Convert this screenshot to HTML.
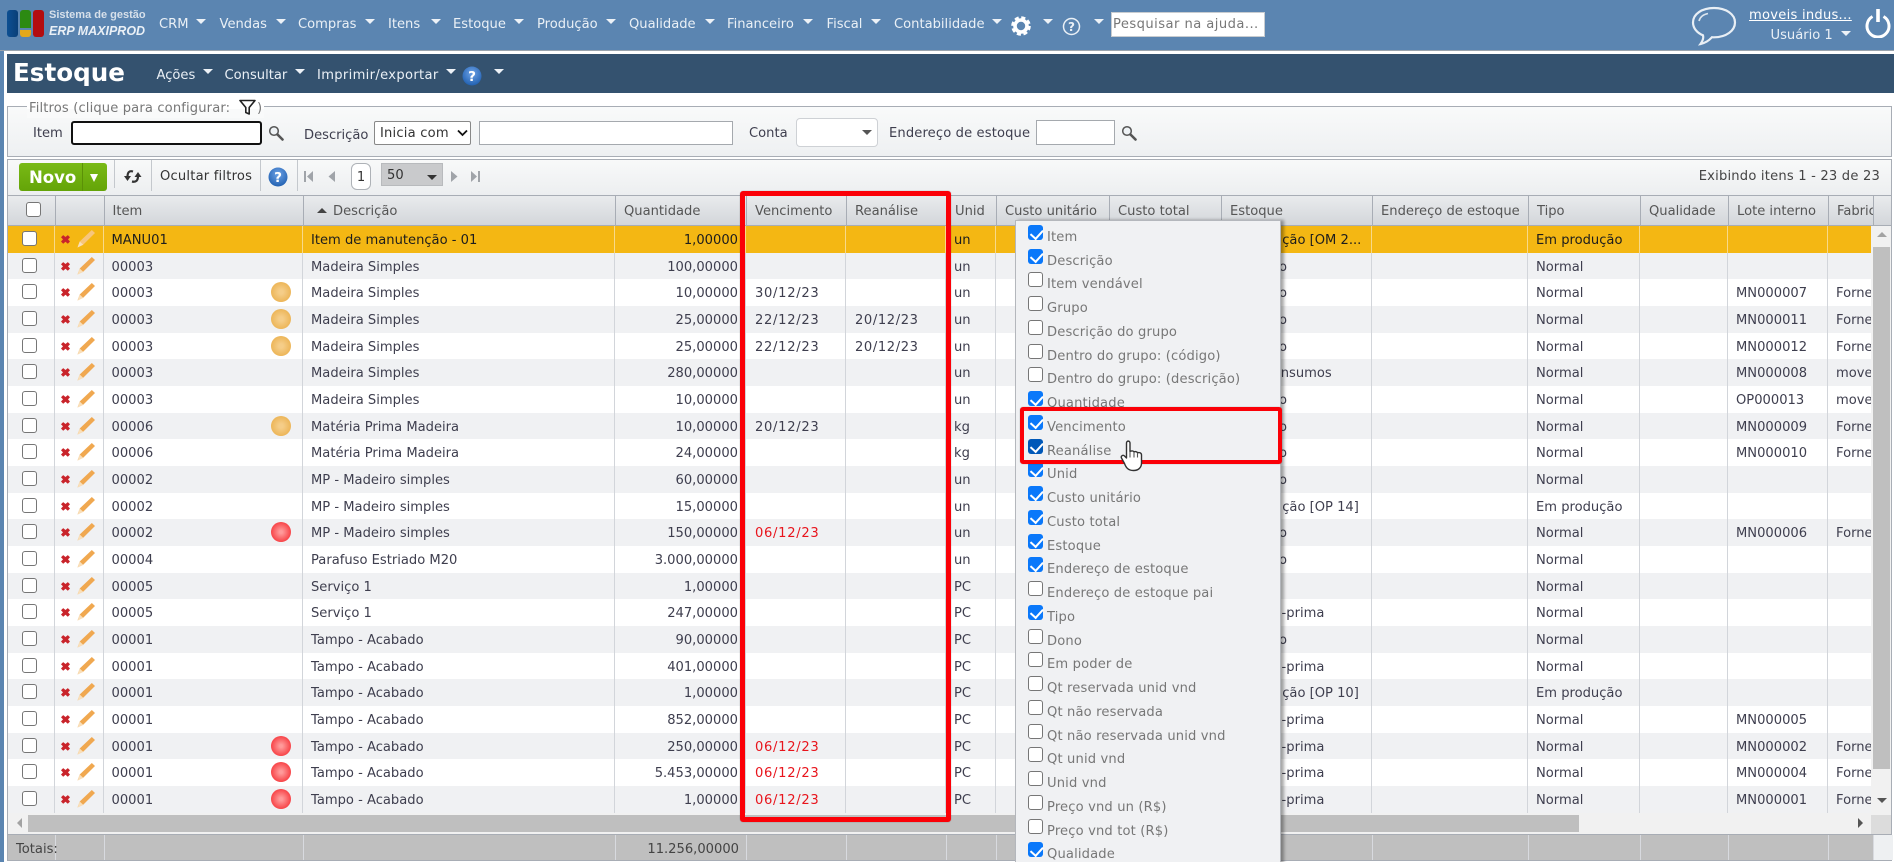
<!DOCTYPE html>
<html lang="pt"><head><meta charset="utf-8"><title>Estoque</title>
<style>
*{box-sizing:border-box}
html,body{margin:0;padding:0;width:1894px;height:862px;overflow:hidden;background:#fff}
body{position:relative;font:13.1px "DejaVu Sans",Verdana,sans-serif;color:#3e3e4e}
.abs,.n,.a,.t{position:absolute}
.n{top:16px;color:#eaf0f6;line-height:18px;white-space:nowrap}
.a{width:0;height:0;border-left:5px solid transparent;border-right:5px solid transparent;border-top:5.5px solid #edf2f7}
.t{white-space:nowrap;line-height:18px}
.h{position:absolute;left:7px;top:195px;width:1885px;height:31px;display:flex;background:linear-gradient(#e9ebed,#d3d6da);border:1px solid #a8adb5;color:#555;line-height:31px}
.h p{margin:0;padding:0 0 0 8px;border-right:1px solid #a8adb5;white-space:nowrap;overflow:hidden;height:29px;flex:none;position:relative}
.b{position:absolute;left:7px;top:226px;width:1864px;height:587px;overflow:hidden}
.r{display:flex;height:26.68px;line-height:30px;background:#fff}
.r:nth-child(even){background:#f0f1f3}
.r.s{background:#f4b713;color:#1d1d1d}
.r p{margin:0;padding:0 8px;border-right:1px solid #d2d5da;white-space:nowrap;overflow:hidden;flex:none;position:relative;height:100%}
.r.s p{border-right-color:#f8d98a}
.r p:nth-child(1),.h p:nth-child(1),.f p:nth-child(1){width:48px}
.r p:nth-child(2),.h p:nth-child(2),.f p:nth-child(2){width:49px}
.r p:nth-child(3),.h p:nth-child(3),.f p:nth-child(3){width:199px;padding-left:7.5px}
.r p:nth-child(4),.h p:nth-child(4),.f p:nth-child(4){width:312px}
.r p:nth-child(5),.h p:nth-child(5),.f p:nth-child(5){width:131px}
.r p:nth-child(6),.h p:nth-child(6),.f p:nth-child(6){width:100px}
.r p:nth-child(7),.h p:nth-child(7),.f p:nth-child(7){width:100px}
.r p:nth-child(8),.h p:nth-child(8),.f p:nth-child(8){width:50px}
.r p:nth-child(9),.h p:nth-child(9),.f p:nth-child(9){width:113px}
.r p:nth-child(10),.h p:nth-child(10),.f p:nth-child(10){width:112px}
.r p:nth-child(11),.h p:nth-child(11),.f p:nth-child(11){width:151px}
.r p:nth-child(12),.h p:nth-child(12),.f p:nth-child(12){width:156px}
.r p:nth-child(13),.h p:nth-child(13),.f p:nth-child(13){width:112px}
.r p:nth-child(14),.h p:nth-child(14),.f p:nth-child(14){width:88px}
.r p:nth-child(15),.h p:nth-child(15),.f p:nth-child(15){width:100px}
.r p:nth-child(16),.h p:nth-child(16),.f p:nth-child(16){width:45px}
.r p:last-child{border-right:0}
.r p:nth-child(5),.f p:nth-child(5){text-align:right;padding-right:7px}
.r p:nth-child(6){padding-left:9px;letter-spacing:.7px}
.r p:nth-child(7){padding-left:9px;letter-spacing:.6px}
.r p:nth-child(1) input{position:absolute;left:15px;top:5px}
.h p:nth-child(1) input{position:absolute;left:18px;top:6px}
input[type=checkbox]{appearance:none;-webkit-appearance:none;position:relative;display:block;width:15px;height:15px;margin:0;background:#fff;border:1.4px solid #767676;border-radius:3px}
input[type=checkbox]:checked{background:#0a78fa;border:0}
input[type=checkbox]:checked::after{content:"";position:absolute;left:5px;top:1.5px;width:5.5px;height:9.5px;border-right:2.4px solid #fff;border-bottom:2.4px solid #fff;transform:rotate(42deg)}
input.k:checked{background:#0058b8!important}
.act{position:absolute;left:0;top:0;width:48px;height:26px;color:#f0a850}
.r.s .act{color:#f7c67c}
.o,.x{position:absolute;left:167px;top:3px;width:20px;height:20px;border-radius:50%}
.o{background:radial-gradient(circle,#f5cd88 15%,#e8a93f 100%)}
.x{background:radial-gradient(circle,#ff9a9a 10%,#f5282d 90%)}
.r p.d{color:#e8141c}
.e{margin-left:-10px}.g{margin-left:3px}
.f{position:absolute;left:7px;top:834px;width:1885px;height:27px;display:flex;background:#bfbfbf;border:1px solid #a8adb5;line-height:29px;color:#444}
.f p{margin:0;padding:0 8px;border-right:1px solid #d8dadf;flex:none;white-space:nowrap;overflow:visible;height:25px}
.m{position:absolute;left:1015px;top:220px;width:266px;height:660px;background:#f0f1f3;border:1px solid #b4b7bc;box-shadow:3px 0 3px rgba(0,0,0,.35)}
.m div{position:absolute;left:0;width:264px;height:24px;color:#777;line-height:18px;white-space:nowrap;letter-spacing:.15px}
.m input{position:absolute!important;left:12px;top:0}
.m span{position:absolute;left:31px;top:4px}
.fx{background:#fff;border:1px solid #a5a9ae}
</style></head>
<body>
<svg width="0" height="0" style="position:absolute"><defs>
<symbol id="act" viewBox="0 0 48 26"><path d="M6 11.300l2.200-2.200 2.300 1.900 2.300-1.900 2.200 2.200-2 2.100 2 2.100-2.200 2.200-2.300-1.900-2.300 1.900-2.200-2.200 2-2.100z" fill="#c9242b"/><path d="M22.500 21.500l2.200-6L36.800 4l3.200 3-11.800 11.700z" fill="currentColor"/><path d="M22.500 21.500l2.200-6 3.500 3.200z" fill="#f9dfb9"/></symbol>
<symbol id="s" viewBox="0 0 16 16"><circle cx="6" cy="6" r="4.300" fill="#eef2f5" stroke="#555" stroke-width="1.500"/><path d="M9.500 9.500L14.500 14.500" stroke="#555" stroke-width="2.600" stroke-linecap="round"/></symbol>
</defs></svg>

<div class="abs" style="left:0;top:0;width:4px;height:862px;background:#5b85b1"></div>
<div class="abs" style="left:0;top:0;width:1894px;height:51px;background:#5b85b1;border-bottom:1px solid #9aa4ae"></div>

<div class="abs" style="left:7px;top:10px;width:10.500px;height:27px;border-radius:3px;background:linear-gradient(90deg,#0d4f92,#0a3f78)"></div>
<div class="abs" style="left:20px;top:10px;width:10.500px;height:18px;border-radius:3px 3px 0 0;background:#2c8a12"></div>
<div class="abs" style="left:20px;top:30px;width:10.500px;height:7px;border-radius:0 0 3px 3px;background:#e3a81c"></div>
<div class="abs" style="left:32.500px;top:10px;width:11px;height:27px;border-radius:3px;background:#b30d10"></div>
<div class="t" style="left:49px;top:6px;font:bold 11px/18px 'Liberation Sans',sans-serif;color:#d7e0ea">Sistema de gestão</div>
<div class="t" style="left:49px;top:22px;font:italic bold 12.500px/18px 'Liberation Sans',sans-serif;color:#eaf0f6">ERP MAXIPROD</div>

<span class="n" style="left:159px">CRM</span><i class="a" style="left:196px;top:19px"></i>
<span class="n" style="left:219.500px">Vendas</span><i class="a" style="left:275.500px;top:19px"></i>
<span class="n" style="left:298px">Compras</span><i class="a" style="left:365px;top:19px"></i>
<span class="n" style="left:388px">Itens</span><i class="a" style="left:431px;top:19px"></i>
<span class="n" style="left:453px">Estoque</span><i class="a" style="left:514px;top:19px"></i>
<span class="n" style="left:537px">Produção</span><i class="a" style="left:606px;top:19px"></i>
<span class="n" style="left:629px">Qualidade</span><i class="a" style="left:705px;top:19px"></i>
<span class="n" style="left:727px">Financeiro</span><i class="a" style="left:803px;top:19px"></i>
<span class="n" style="left:826.500px">Fiscal</span><i class="a" style="left:871px;top:19px"></i>
<span class="n" style="left:894px">Contabilidade</span><i class="a" style="left:992px;top:19px"></i>
<svg class="abs" style="left:1011px;top:16px" width="20" height="20" viewBox="0 0 20 20"><circle cx="10" cy="10" r="6" fill="none" stroke="#fff" stroke-width="3.600"/><circle cx="10" cy="10" r="8.300" fill="none" stroke="#fff" stroke-width="3" stroke-dasharray="4 2.520"/></svg>
<i class="a" style="left:1043px;top:19px"></i>
<svg class="abs" style="left:1062px;top:17px" width="19" height="19" viewBox="0 0 19 19"><circle cx="9.500" cy="9.500" r="8" fill="none" stroke="#eaf0f6" stroke-width="1.500"/><text x="9.500" y="14" font-family="DejaVu Sans" font-size="12" font-weight="bold" text-anchor="middle" fill="#eaf0f6">?</text></svg>
<i class="a" style="left:1094px;top:19px"></i>
<div class="abs" style="left:1111px;top:12px;width:154px;height:25px;background:#fff;border:1px solid #c8ccd0;color:#777;line-height:23px;padding-left:1px;white-space:nowrap;overflow:hidden;letter-spacing:.45px">Pesquisar na ajuda...</div>

<svg class="abs" style="left:1691px;top:6px" width="46" height="40" viewBox="0 0 46 40"><path d="M23 2C11 2 2 8 2 16.500c0 5.500 4 10.500 10 12.800.800 2.700-.500 6-2.500 8.700 5-1 9-4 11.500-6.800.8.100 1.500.100 2 .100 12 0 21-6.500 21-14.800S35 2 23 2z" fill="none" stroke="#e9eff5" stroke-width="2.200"/><path d="M8 15c1-4 4-6.500 9-7.500" fill="none" stroke="#dde6ee" stroke-width="1.600"/></svg>
<span class="n" style="left:1749px;top:7px;text-decoration:underline;color:#fff;letter-spacing:.25px">moveis indus...</span>
<span class="n" style="left:1770.500px;top:27px">Usuário 1</span><i class="a" style="left:1841px;top:31px"></i>
<svg class="abs" style="left:1864px;top:7px" width="28" height="31" viewBox="0 0 28 31"><path d="M8.500 9.500a11 11 0 1 0 11 0" fill="none" stroke="#fff" stroke-width="3"/><path d="M14 2v13" stroke="#fff" stroke-width="3.600"/></svg>

<div class="abs" style="left:7px;top:54px;width:1887px;height:39px;background:#34526f"></div>
<div class="t" style="left:13px;top:57px;font:bold 24.600px/32px 'DejaVu Sans',sans-serif;color:#fff">Estoque</div>
<span class="n" style="left:156.500px;top:67px">Ações</span><i class="a" style="left:203px;top:69px"></i>
<span class="n" style="left:224.500px;top:67px">Consultar</span><i class="a" style="left:295px;top:69px"></i>
<span class="n" style="left:317px;top:67px;letter-spacing:.33px">Imprimir/exportar</span><i class="a" style="left:446px;top:69px"></i>
<svg class="abs" style="left:462px;top:66px" width="20" height="20" viewBox="0 0 20 20"><defs><radialGradient id="g" cx=".5" cy=".35" r=".7"><stop offset="0" stop-color="#6ea3e6"/><stop offset="1" stop-color="#1c5cae"/></radialGradient></defs><circle cx="10" cy="10" r="9.500" fill="url(#g)"/><text x="10" y="15" font-family="DejaVu Sans" font-size="13.500" font-weight="bold" text-anchor="middle" fill="#fff">?</text></svg>
<i class="a" style="left:494px;top:69px"></i>

<div class="abs" style="left:7px;top:106px;width:1885px;height:51px;border:1px solid #a8adb5;background:linear-gradient(#f9fafa,#eef0f2)"></div>
<div class="t" style="left:27px;top:100px;padding:0 2px;color:#777;background:linear-gradient(#fff 50%,#f9fafa 50%);width:237px;letter-spacing:.14px">Filtros (clique para configurar:</div>
<span class="t" style="left:257px;top:100px;color:#777">)</span>
<svg class="abs" style="left:239px;top:99px" width="17" height="16" viewBox="0 0 17 16"><path d="M1 1.500h15L10.200 8.500v6.500l-3.400-1.500V8.500z" fill="#fff" stroke="#222" stroke-width="1.600" stroke-linejoin="round"/></svg>
<span class="t" style="left:33px;top:125px">Item</span>
<div class="abs" style="left:70.500px;top:120.500px;width:191px;height:24.500px;background:#fff;border:2px solid #111;border-radius:3px"></div>
<svg class="abs" style="left:268px;top:125px" width="16" height="16"><use href="#s"/></svg>
<span class="t" style="left:304px;top:127px">Descrição</span>
<div class="abs" style="left:374px;top:121px;width:97px;height:24px;background:#fff;border:1px solid #888;border-radius:2px;line-height:23px;padding-left:5px;color:#333;letter-spacing:.2px">Inicia com<svg class="abs" style="left:82px;top:7px" width="11" height="8" viewBox="0 0 11 8"><path d="M1 1.500l4.500 4.500 4.500-4.500" fill="none" stroke="#111" stroke-width="1.800"/></svg></div>
<div class="abs fx" style="left:479px;top:121px;width:254px;height:24px"></div>
<span class="t" style="left:749px;top:125px">Conta</span>
<div class="abs" style="left:795.500px;top:118px;width:82px;height:29px;background:#fff;border:1px solid #ced1d5;border-radius:4px"></div>
<i class="a" style="left:862px;top:130px;border-top-color:#555"></i>
<span class="t" style="left:889px;top:125px;letter-spacing:.13px">Endereço de estoque</span>
<div class="abs fx" style="left:1036px;top:120px;width:79px;height:25px"></div>
<svg class="abs" style="left:1121px;top:125px" width="16" height="16"><use href="#s"/></svg>

<div class="abs" style="left:7px;top:159px;width:1885px;height:37px;border:1px solid #a8adb5;border-bottom:0;background:linear-gradient(#f8f9f9,#eceef0)"></div>
<div class="abs" style="left:19px;top:163px;width:88px;height:28px;border-radius:3px;background:linear-gradient(#79ba16,#64a408)"></div>
<div class="abs" style="left:82px;top:163px;width:1px;height:28px;background:#5b9107"></div>
<div class="t" style="left:29px;top:168px;font:bold 16.500px/19px 'DejaVu Sans',sans-serif;color:#fff">Novo</div>
<div class="abs" style="left:90px;top:174px;width:0;height:0;border-left:4.500px solid transparent;border-right:4.500px solid transparent;border-top:8px solid #fff"></div>
<div class="abs" style="left:114px;top:160px;width:1px;height:28px;background:#c4c8cd"></div>
<div class="abs" style="left:151px;top:160px;width:1px;height:31px;background:#c4c8cd"></div>
<div class="abs" style="left:260px;top:160px;width:1px;height:31px;background:#c4c8cd"></div>
<div class="abs" style="left:297px;top:160px;width:1px;height:31px;background:#c4c8cd"></div>
<svg class="abs" style="left:124px;top:168px" width="18" height="17" viewBox="0 0 18 17"><path d="M9 3.500C5.500 2.500 3.500 4 3.500 9" fill="none" stroke="#333" stroke-width="2.200"/><path d="M0 8h7L3.500 13z" fill="#333"/><path d="M8 13.500c4 1 6-1 6-5.500" fill="none" stroke="#333" stroke-width="2.200"/><path d="M10.500 9h7L14 4z" fill="#333"/></svg>
<span class="t" style="left:160px;top:168px;color:#333;letter-spacing:.2px">Ocultar filtros</span>
<svg class="abs" style="left:268px;top:167px" width="20" height="20" viewBox="0 0 20 20"><circle cx="10" cy="10" r="9.500" fill="url(#g)"/><text x="10" y="15" font-family="DejaVu Sans" font-size="13.500" font-weight="bold" text-anchor="middle" fill="#fff">?</text></svg>
<svg class="abs" style="left:304px;top:170px" width="180" height="14" viewBox="0 0 180 14"><g fill="#a0a4a9"><rect x="0" y="1" width="2" height="11"/><path d="M9 1v11L3 6.500z"/><path d="M31 1v11L24.500 6.500z"/><path d="M147 1v11l6.500-5.500z"/><path d="M167 1v11l6-5.500z"/><rect x="174" y="1" width="2" height="11"/></g></svg>
<div class="abs" style="left:351px;top:163px;width:20px;height:27px;background:#fff;border:1px solid #aeb2b7;border-radius:6px;text-align:center;line-height:27px;color:#333">1</div>
<div class="abs" style="left:381px;top:163px;width:62px;height:23px;background:#c9cacc;border:1px solid #b8babd;line-height:24px;padding-left:5px;color:#333">50</div>
<i class="a" style="left:427px;top:175px;border-top-color:#333;border-left-width:5.500px;border-right-width:5.500px"></i>
<span class="t" style="right:14px;top:168px;color:#444;letter-spacing:.2px">Exibindo itens 1 - 23 de 23</span>

<div class="h"><p><input type="checkbox"></p><p></p><p>Item</p><p style="padding-left:29px"><i class="a" style="left:13px;top:12px;border-top:0;border-bottom:5.500px solid #444"></i>Descrição</p><p>Quantidade</p><p>Vencimento</p><p>Reanálise</p><p>Unid</p><p>Custo unitário</p><p>Custo total</p><p>Estoque</p><p>Endereço de estoque</p><p>Tipo</p><p>Qualidade</p><p>Lote interno</p><p>Fabricante</p></div>

<div class="b">
<div class="r s"><p><input type="checkbox"></p><p><svg class="act"><use href="#act"/></svg></p><p>MANU01</p><p>Item de manutenção - 01</p><p>1,00000</p><p></p><p></p><p>un</p><p></p><p></p><p><span class="e">Em produção [OM 2...</span></p><p></p><p>Em produção</p><p></p><p></p><p></p></div>
<div class="r"><p><input type="checkbox"></p><p><svg class="act"><use href="#act"/></svg></p><p>00003</p><p>Madeira Simples</p><p>100,00000</p><p></p><p></p><p>un</p><p></p><p></p><p>Depósito</p><p></p><p>Normal</p><p></p><p></p><p></p></div>
<div class="r"><p><input type="checkbox"></p><p><svg class="act"><use href="#act"/></svg></p><p>00003<i class="o"></i></p><p>Madeira Simples</p><p>10,00000</p><p>30/12/23</p><p></p><p>un</p><p></p><p></p><p>Depósito</p><p></p><p>Normal</p><p></p><p>MN000007</p><p>Fornecedor</p></div>
<div class="r"><p><input type="checkbox"></p><p><svg class="act"><use href="#act"/></svg></p><p>00003<i class="o"></i></p><p>Madeira Simples</p><p>25,00000</p><p>22/12/23</p><p>20/12/23</p><p>un</p><p></p><p></p><p>Depósito</p><p></p><p>Normal</p><p></p><p>MN000011</p><p>Fornecedor</p></div>
<div class="r"><p><input type="checkbox"></p><p><svg class="act"><use href="#act"/></svg></p><p>00003<i class="o"></i></p><p>Madeira Simples</p><p>25,00000</p><p>22/12/23</p><p>20/12/23</p><p>un</p><p></p><p></p><p>Depósito</p><p></p><p>Normal</p><p></p><p>MN000012</p><p>Fornecedor</p></div>
<div class="r"><p><input type="checkbox"></p><p><svg class="act"><use href="#act"/></svg></p><p>00003</p><p>Madeira Simples</p><p>280,00000</p><p></p><p></p><p>un</p><p></p><p></p><p><span class="g">Estoq. Insumos</span></p><p></p><p>Normal</p><p></p><p>MN000008</p><p>moveis</p></div>
<div class="r"><p><input type="checkbox"></p><p><svg class="act"><use href="#act"/></svg></p><p>00003</p><p>Madeira Simples</p><p>10,00000</p><p></p><p></p><p>un</p><p></p><p></p><p>Depósito</p><p></p><p>Normal</p><p></p><p>OP000013</p><p>moveis</p></div>
<div class="r"><p><input type="checkbox"></p><p><svg class="act"><use href="#act"/></svg></p><p>00006<i class="o"></i></p><p>Matéria Prima Madeira</p><p>10,00000</p><p>20/12/23</p><p></p><p>kg</p><p></p><p></p><p>Depósito</p><p></p><p>Normal</p><p></p><p>MN000009</p><p>Fornecedor</p></div>
<div class="r"><p><input type="checkbox"></p><p><svg class="act"><use href="#act"/></svg></p><p>00006</p><p>Matéria Prima Madeira</p><p>24,00000</p><p></p><p></p><p>kg</p><p></p><p></p><p>Depósito</p><p></p><p>Normal</p><p></p><p>MN000010</p><p>Fornecedor</p></div>
<div class="r"><p><input type="checkbox"></p><p><svg class="act"><use href="#act"/></svg></p><p>00002</p><p>MP - Madeiro simples</p><p>60,00000</p><p></p><p></p><p>un</p><p></p><p></p><p>Depósito</p><p></p><p>Normal</p><p></p><p></p><p></p></div>
<div class="r"><p><input type="checkbox"></p><p><svg class="act"><use href="#act"/></svg></p><p>00002</p><p>MP - Madeiro simples</p><p>15,00000</p><p></p><p></p><p>un</p><p></p><p></p><p><span class="e">Em produção [OP 14]</span></p><p></p><p>Em produção</p><p></p><p></p><p></p></div>
<div class="r"><p><input type="checkbox"></p><p><svg class="act"><use href="#act"/></svg></p><p>00002<i class="x"></i></p><p>MP - Madeiro simples</p><p>150,00000</p><p class="d">06/12/23</p><p></p><p>un</p><p></p><p></p><p>Depósito</p><p></p><p>Normal</p><p></p><p>MN000006</p><p>Fornecedor</p></div>
<div class="r"><p><input type="checkbox"></p><p><svg class="act"><use href="#act"/></svg></p><p>00004</p><p>Parafuso Estriado M20</p><p>3.000,00000</p><p></p><p></p><p>un</p><p></p><p></p><p>Depósito</p><p></p><p>Normal</p><p></p><p></p><p></p></div>
<div class="r"><p><input type="checkbox"></p><p><svg class="act"><use href="#act"/></svg></p><p>00005</p><p>Serviço 1</p><p>1,00000</p><p></p><p></p><p>PC</p><p></p><p></p><p>Entrada</p><p></p><p>Normal</p><p></p><p></p><p></p></div>
<div class="r"><p><input type="checkbox"></p><p><svg class="act"><use href="#act"/></svg></p><p>00005</p><p>Serviço 1</p><p>247,00000</p><p></p><p></p><p>PC</p><p></p><p></p><p><span class="g">Matéria-prima</span></p><p></p><p>Normal</p><p></p><p></p><p></p></div>
<div class="r"><p><input type="checkbox"></p><p><svg class="act"><use href="#act"/></svg></p><p>00001</p><p>Tampo - Acabado</p><p>90,00000</p><p></p><p></p><p>PC</p><p></p><p></p><p>Depósito</p><p></p><p>Normal</p><p></p><p></p><p></p></div>
<div class="r"><p><input type="checkbox"></p><p><svg class="act"><use href="#act"/></svg></p><p>00001</p><p>Tampo - Acabado</p><p>401,00000</p><p></p><p></p><p>PC</p><p></p><p></p><p><span class="g">Matéria-prima</span></p><p></p><p>Normal</p><p></p><p></p><p></p></div>
<div class="r"><p><input type="checkbox"></p><p><svg class="act"><use href="#act"/></svg></p><p>00001</p><p>Tampo - Acabado</p><p>1,00000</p><p></p><p></p><p>PC</p><p></p><p></p><p><span class="e">Em produção [OP 10]</span></p><p></p><p>Em produção</p><p></p><p></p><p></p></div>
<div class="r"><p><input type="checkbox"></p><p><svg class="act"><use href="#act"/></svg></p><p>00001</p><p>Tampo - Acabado</p><p>852,00000</p><p></p><p></p><p>PC</p><p></p><p></p><p><span class="g">Matéria-prima</span></p><p></p><p>Normal</p><p></p><p>MN000005</p><p></p></div>
<div class="r"><p><input type="checkbox"></p><p><svg class="act"><use href="#act"/></svg></p><p>00001<i class="x"></i></p><p>Tampo - Acabado</p><p>250,00000</p><p class="d">06/12/23</p><p></p><p>PC</p><p></p><p></p><p><span class="g">Matéria-prima</span></p><p></p><p>Normal</p><p></p><p>MN000002</p><p>Fornecedor</p></div>
<div class="r"><p><input type="checkbox"></p><p><svg class="act"><use href="#act"/></svg></p><p>00001<i class="x"></i></p><p>Tampo - Acabado</p><p>5.453,00000</p><p class="d">06/12/23</p><p></p><p>PC</p><p></p><p></p><p><span class="g">Matéria-prima</span></p><p></p><p>Normal</p><p></p><p>MN000004</p><p>Fornecedor</p></div>
<div class="r"><p><input type="checkbox"></p><p><svg class="act"><use href="#act"/></svg></p><p>00001<i class="x"></i></p><p>Tampo - Acabado</p><p>1,00000</p><p class="d">06/12/23</p><p></p><p>PC</p><p></p><p></p><p><span class="g">Matéria-prima</span></p><p></p><p>Normal</p><p></p><p>MN000001</p><p>Fornecedor</p></div>
</div>

<div class="abs" style="left:7px;top:226px;width:1px;height:608px;background:#a8adb5"></div>
<div class="abs" style="left:1891px;top:226px;width:1px;height:608px;background:#a8adb5"></div>
<div class="abs" style="left:1871px;top:226px;width:20px;height:589px;background:#f1f1f1"></div>
<div class="abs" style="left:1873px;top:247px;width:17px;height:522px;background:#bfbfbf"></div>
<i class="a" style="left:1877px;top:232px;border-top:0;border-bottom:5.500px solid #a3a3a3"></i>
<i class="a" style="left:1877px;top:798px;border-top-color:#555"></i>
<div class="abs" style="left:8px;top:813px;width:1863px;height:21px;background:#f1f1f1"></div>
<div class="abs" style="left:28px;top:815px;width:1551px;height:17px;background:#bfbfbf"></div>
<div class="abs" style="left:17px;top:818px;width:0;height:0;border-top:5.500px solid transparent;border-bottom:5.500px solid transparent;border-right:5.500px solid #a3a3a3"></div>
<div class="abs" style="left:1858px;top:818px;width:0;height:0;border-top:5.500px solid transparent;border-bottom:5.500px solid transparent;border-left:5.500px solid #555"></div>
<div class="abs" style="left:1871px;top:815px;width:20px;height:19px;background:#dcdcdc"></div>

<div class="f"><p>Totais:</p><p></p><p></p><p></p><p>11.256,00000</p><p></p><p></p><p></p><p></p><p></p><p></p><p></p><p></p><p></p><p></p><p style="width:45px"></p><p style="width:19px;background:#eef0f2;border:0;padding:0;height:25px"></p></div>

<div class="abs" style="left:740px;top:191px;width:211px;height:631px;border:5px solid #fb0007;border-radius:3px;box-shadow:0 0 1px rgba(0,0,0,.4)"></div>

<div class="m">
<div style="top:4px"><input type="checkbox" checked><span>Item</span></div>
<div style="top:27.740px"><input type="checkbox" checked><span>Descrição</span></div>
<div style="top:51.480px"><input type="checkbox"><span>Item vendável</span></div>
<div style="top:75.220px"><input type="checkbox"><span>Grupo</span></div>
<div style="top:98.960px"><input type="checkbox"><span>Descrição do grupo</span></div>
<div style="top:122.700px"><input type="checkbox"><span>Dentro do grupo: (código)</span></div>
<div style="top:146.440px"><input type="checkbox"><span>Dentro do grupo: (descrição)</span></div>
<div style="top:170.180px"><input type="checkbox" checked><span>Quantidade</span></div>
<div style="top:193.920px"><input type="checkbox" checked><span>Vencimento</span></div>
<div style="top:217.660px"><input type="checkbox" checked class="k"><span>Reanálise</span></div>
<div style="top:241.400px"><input type="checkbox" checked><span>Unid</span></div>
<div style="top:265.140px"><input type="checkbox" checked><span>Custo unitário</span></div>
<div style="top:288.880px"><input type="checkbox" checked><span>Custo total</span></div>
<div style="top:312.620px"><input type="checkbox" checked><span>Estoque</span></div>
<div style="top:336.360px"><input type="checkbox" checked><span>Endereço de estoque</span></div>
<div style="top:360.100px"><input type="checkbox"><span>Endereço de estoque pai</span></div>
<div style="top:383.840px"><input type="checkbox" checked><span>Tipo</span></div>
<div style="top:407.580px"><input type="checkbox"><span>Dono</span></div>
<div style="top:431.320px"><input type="checkbox"><span>Em poder de</span></div>
<div style="top:455.060px"><input type="checkbox"><span>Qt reservada unid vnd</span></div>
<div style="top:478.800px"><input type="checkbox"><span>Qt não reservada</span></div>
<div style="top:502.540px"><input type="checkbox"><span>Qt não reservada unid vnd</span></div>
<div style="top:526.280px"><input type="checkbox"><span>Qt unid vnd</span></div>
<div style="top:550.020px"><input type="checkbox"><span>Unid vnd</span></div>
<div style="top:573.760px"><input type="checkbox"><span>Preço vnd un (R$)</span></div>
<div style="top:597.500px"><input type="checkbox"><span>Preço vnd tot (R$)</span></div>
<div style="top:621.240px"><input type="checkbox" checked><span>Qualidade</span></div>
</div>

<div class="abs" style="left:1020px;top:407px;width:262px;height:57px;border:4.500px solid #fb0007;border-radius:3px;box-shadow:0 0 1px rgba(0,0,0,.4)"></div>

<svg class="abs" style="left:1120px;top:440px" width="24" height="32" viewBox="0 0 24 32"><path d="M6.500 3c0-2.500 3.500-2.500 3.500 0v8.500c1.500-.8 3.500-.8 4 .5 1.200-.7 3-.5 3.500.8 1.500-.6 4-.2 4 2.200v8c0 4.500-3 7.500-8 7.500-5.500 0-7.500-3-9-7l-3-5.500c-1-2 1.500-3.500 3-2l2 2z" fill="#fff" stroke="#333" stroke-width="1.400" stroke-linejoin="round"/><path d="M10 11.500v6M14 12v5.500M17.500 13v4.500" stroke="#555" stroke-width="1.100"/></svg>
</body></html>
